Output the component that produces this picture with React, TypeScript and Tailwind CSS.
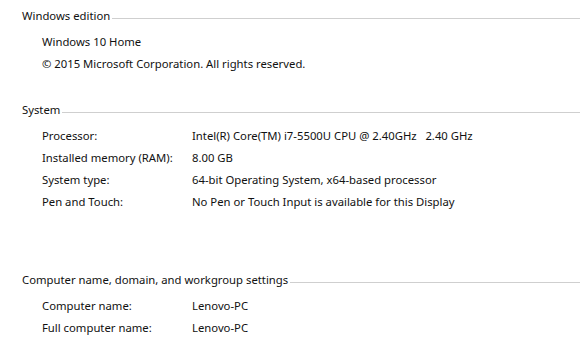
const sections = [
  {
    title: "Windows edition",
    rows: [
      { label: "Windows 10 Home" },
      { label: "© 2015 Microsoft Corporation. All rights reserved." },
    ],
  },
  {
    title: "System",
    rows: [
      { label: "Processor:", value: "Intel(R) Core(TM) i7-5500U CPU @ 2.40GHz   2.40 GHz" },
      { label: "Installed memory (RAM):", value: "8.00 GB" },
      { label: "System type:", value: "64-bit Operating System, x64-based processor" },
      { label: "Pen and Touch:", value: "No Pen or Touch Input is available for this Display" },
    ],
  },
  {
    title: "Computer name, domain, and workgroup settings",
    rows: [
      { label: "Computer name:", value: "Lenovo-PC" },
      { label: "Full computer name:", value: "Lenovo-PC" },
    ],
  },
];

const gaps = ["mt-0", "mt-[27px]", "mt-[59px]"];

const Section = ({ title, rows, gap }: { title: string; rows: { label: string; value?: string }[]; gap: string }) => (
  <div className={gap}>
    {/* header with rule */}
    <div className="flex items-center pl-[22px] h-4">
      <span className="whitespace-nowrap">{title}</span>
      <div className="flex-1 h-px bg-[#cfcfcf] ml-[2px] mt-[4px]" />
    </div>
    <div className="mt-[7px] pl-[42px]">
      {rows.map((r) => (
        <div key={r.label} className="flex h-[22px] items-center">
          {r.value !== undefined ? (
            <>
              <span className="w-[150px] shrink-0">{r.label}</span>
              <span className="whitespace-pre">{r.value}</span>
            </>
          ) : (
            <span>{r.label}</span>
          )}
        </div>
      ))}
    </div>
  </div>
);

export default function App() {
  return (
    <div
      className="w-[580px] h-[346px] bg-white text-[#111] text-[11.3px] leading-4 pt-2 overflow-hidden"
      style={{ fontFamily: '"Noto Sans", "Open Sans", sans-serif' }}
    >
      {sections.map((s, i) => (
        <Section key={s.title} title={s.title} rows={s.rows} gap={gaps[i]} />
      ))}
    </div>
  );
}
